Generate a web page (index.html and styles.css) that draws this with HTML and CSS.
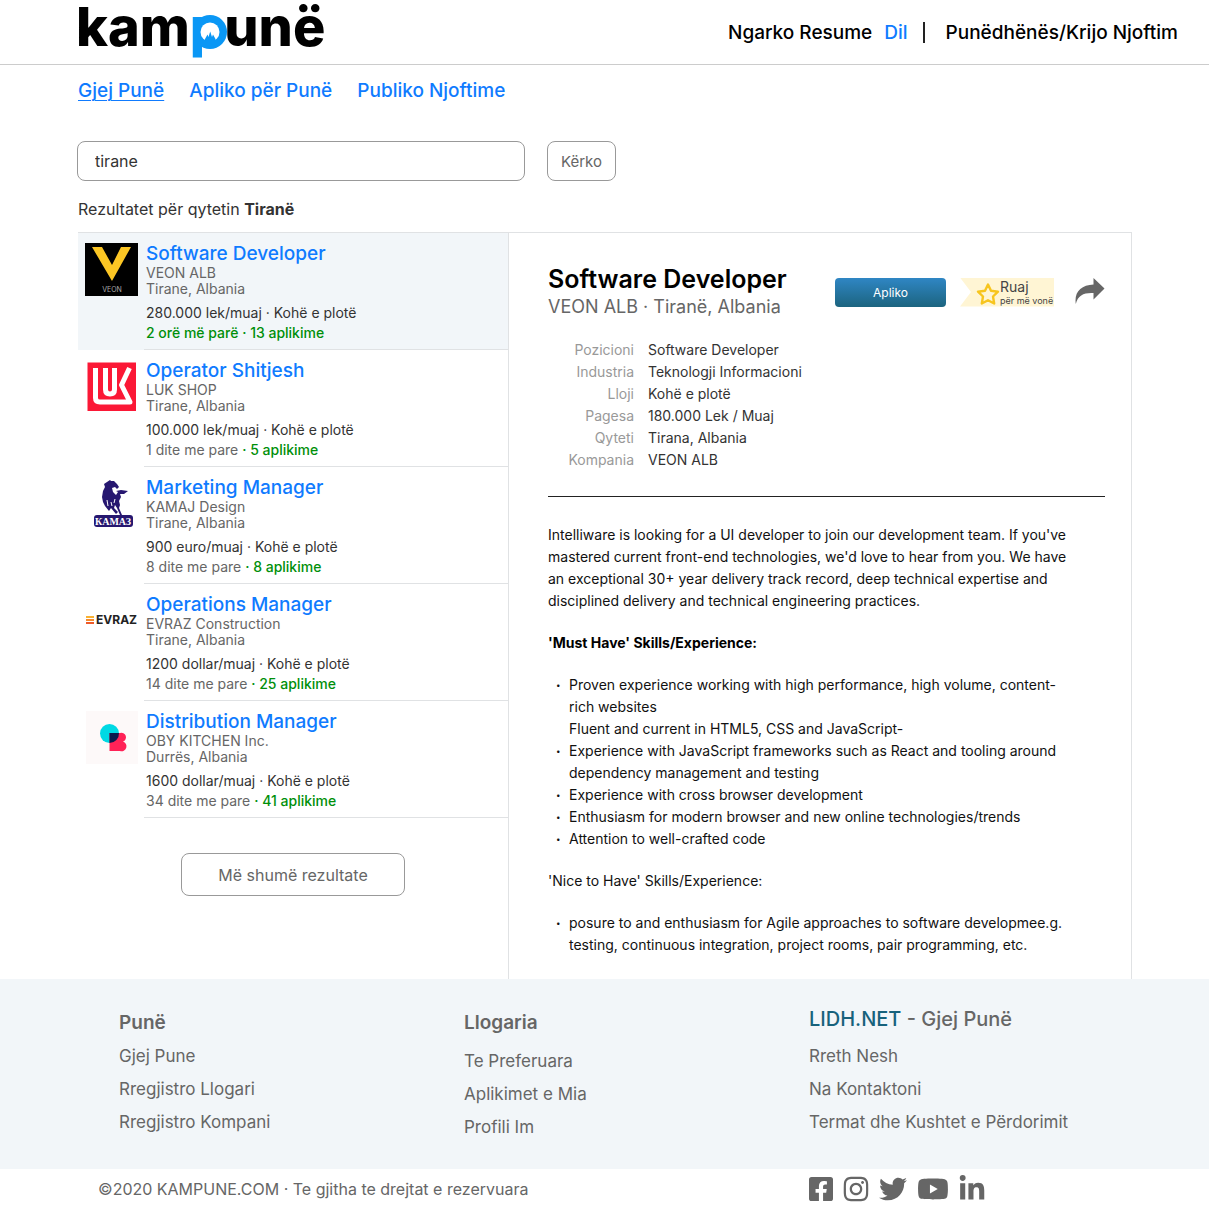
FILE: index.html
```html
<!DOCTYPE html>
<html lang="sq">
<head>
<meta charset="utf-8">
<meta name="viewport" content="width=device-width, initial-scale=1">
<title>kampunë – Gjej Punë</title>
<link rel="stylesheet" href="styles.css">
</head>
<body>
<header class="topbar">
  <a class="brand" href="#" aria-label="kampunë">kam<span class="brand-p">p<svg class="brand-bowl" viewBox="0 0 34 34" aria-hidden="true"><circle cx="17" cy="17" r="17" fill="#0a97f5"/><circle cx="17" cy="17" r="9.500" fill="#fff"/><path fill="#0a97f5" d="M12 27V24L14.500 19.500L15.500 22L17.200 16.500L19 22L20 19.500L22.500 24V27Z"/></svg></span>unë</a>
  <nav class="account">
    <a href="#">Ngarko Resume</a>
    <a class="logout" href="#">Dil</a>
    <span class="bar"></span>
    <a href="#">Punëdhënës/Krijo Njoftim</a>
  </nav>
</header>

<nav class="tabs">
  <a class="tab tab-active" href="#">Gjej Punë</a>
  <a class="tab" href="#">Apliko për Punë</a>
  <a class="tab" href="#">Publiko Njoftime</a>
</nav>

<form class="search">
  <input class="search-box" type="text" value="tirane" aria-label="Qyteti">
  <button class="search-button" type="button">Kërko</button>
</form>
<p class="summary">Rezultatet për qytetin <strong>Tiranë</strong></p>

<main class="board">
  <section class="results">
    <article class="job job-active">
      <svg class="logo" viewBox="0 0 53 53" aria-hidden="true"><path fill="#000" d="M0 0H53V53H0Z"/><path fill="#fcc624" d="M7 4H17L27 22L36 4H46L27 38Z"/><text x="27" y="49" text-anchor="middle" class="veon-name">VEON</text></svg>
      <div class="job-text">
        <h2><a href="#">Software Developer</a></h2>
        <p class="company">VEON ALB</p>
        <p class="company">Tirane, Albania</p>
        <p class="pay">280.000 lek/muaj · Kohë e plotë</p>
        <p class="age"><span class="count">2 orë më parë · 13 aplikime</span></p>
      </div>
    </article>
    <article class="job">
      <svg class="logo" viewBox="0 0 53 53" aria-hidden="true"><path fill="#fb1836" d="M2.500 2.500H51V51H2.500Z"/><g fill="none" stroke="#fff" stroke-width="5" stroke-linejoin="round"><path d="M10.500 8V38Q10.500 42 15 42H45L36.500 25L44.500 8"/><path d="M20.500 8V29.500Q20.500 34 25 34T29.500 29.500V8"/></g></svg>
      <div class="job-text">
        <h2><a href="#">Operator Shitjesh</a></h2>
        <p class="company">LUK SHOP</p>
        <p class="company">Tirane, Albania</p>
        <p class="pay">100.000 lek/muaj · Kohë e plotë</p>
        <p class="age">1 dite me pare <span class="count">· 5 aplikime</span></p>
      </div>
    </article>
    <article class="job">
      <svg class="logo" viewBox="0 0 53 53" aria-hidden="true"><path fill="#261770" d="M19 7L22 5L25 3L26 4L29 4L32 7L34 10L32 12L30 10L27 11L28 15L31 18L33 15L31 14L36 13L43 14L39 17L35 17L36 20L34 24L35 28L34 31L37 38H35L32 31L30 28L29 31L33 35L31 37L26 31L24 34L20 29L18 25L17 20L18 14L20 10Z"/><path d="M22 23L23 29M26 25L27 29M30 22L29 26" stroke="#fff" fill="none"/><rect x="9" y="38" width="39" height="12" rx="3" fill="#261770"/><text x="28" y="48" text-anchor="middle" class="kamaz-name">КАМАЗ</text></svg>
      <div class="job-text">
        <h2><a href="#">Marketing Manager</a></h2>
        <p class="company">KAMAJ Design</p>
        <p class="company">Tirane, Albania</p>
        <p class="pay">900 euro/muaj · Kohë e plotë</p>
        <p class="age">8 dite me pare <span class="count">· 8 aplikime</span></p>
      </div>
    </article>
    <article class="job">
      <svg class="logo" viewBox="0 0 53 53" aria-hidden="true"><path fill="#f9b233" d="M1 22H9V24H1Z"/><path fill="#f68b2c" d="M1 25H9V27H1Z"/><path fill="#ee5a2a" d="M1 28H9V30H1Z"/><text x="11" y="30" class="evraz-name">EVRAZ</text></svg>
      <div class="job-text">
        <h2><a href="#">Operations Manager</a></h2>
        <p class="company">EVRAZ Construction</p>
        <p class="company">Tirane, Albania</p>
        <p class="pay">1200 dollar/muaj · Kohë e plotë</p>
        <p class="age">14 dite me pare <span class="count">· 25 aplikime</span></p>
      </div>
    </article>
    <article class="job">
      <svg class="logo" viewBox="0 0 53 53" aria-hidden="true"><path fill="#fdf9f9" d="M1 0H53V53H1Z"/><circle cx="24.500" cy="22.500" r="9.500" fill="#00d9e4"/><path fill="#ff2257" d="M24.500 22H35A4.500 4.500 0 0 1 38 30.500A4.800 4.800 0 0 1 35 40H24.500Z"/><path fill="#091a4d" d="M24.500 22H34A9.500 9.500 0 0 1 24.500 32Z"/></svg>
      <div class="job-text">
        <h2><a href="#">Distribution Manager</a></h2>
        <p class="company">OBY KITCHEN Inc.</p>
        <p class="company">Durrës, Albania</p>
        <p class="pay">1600 dollar/muaj · Kohë e plotë</p>
        <p class="age">34 dite me pare <span class="count">· 41 aplikime</span></p>
      </div>
    </article>
    <button class="more" type="button">Më shumë rezultate</button>
  </section>

  <section class="detail">
    <div class="detail-head">
      <div class="detail-title">
        <h1>Software Developer</h1>
        <p>VEON ALB · Tiranë, Albania</p>
      </div>
      <div class="actions">
        <button class="apply" type="button">Apliko</button>
        <button class="save" type="button">
          <svg class="star" viewBox="0 0 24 24" aria-hidden="true"><path d="M12 2.500L15 8.800L22 9.700L17 14.500L18.200 21.500L12 18.200L5.800 21.500L7 14.500L2 9.700L9 8.800Z" fill="none" stroke="#f7c51e" stroke-width="2.400" stroke-linejoin="round"/></svg>
          <span class="save-text"><span class="save-main">Ruaj</span><span class="save-sub">për më vonë</span></span>
        </button>
        <button class="share" type="button" aria-label="Shpërndaj"><svg viewBox="0 0 30 28" aria-hidden="true"><path fill="#666" d="M18.500 0L29.500 10.500L18.500 21.500V15C9 14.500 3 17 .800 26C-1 14 6 7 18.500 6.500Z"/></svg></button>
      </div>
    </div>
    <dl class="facts">
      <dt>Pozicioni</dt><dd>Software Developer</dd>
      <dt>Industria</dt><dd>Teknologji Informacioni</dd>
      <dt>Lloji</dt><dd>Kohë e plotë</dd>
      <dt>Pagesa</dt><dd>180.000 Lek / Muaj</dd>
      <dt>Qyteti</dt><dd>Tirana, Albania</dd>
      <dt>Kompania</dt><dd>VEON ALB</dd>
    </dl>
    <div class="description">
      <p>Intelliware is looking for a UI developer to join our development team. If you've<br>mastered current front-end technologies, we'd love to hear from you. We have<br>an exceptional 30+ year delivery track record, deep technical expertise and<br>disciplined delivery and technical engineering practices.</p>
      <p class="strong">'Must Have' Skills/Experience:</p>
      <ul>
        <li>Proven experience working with high performance, high volume, content-<br>rich websites<br>Fluent and current in HTML5, CSS and JavaScript-</li>
        <li>Experience with JavaScript frameworks such as React and tooling around<br>dependency management and testing</li>
        <li>Experience with cross browser development</li>
        <li>Enthusiasm for modern browser and new online technologies/trends</li>
        <li>Attention to well-crafted code</li>
      </ul>
      <p>'Nice to Have' Skills/Experience:</p>
      <ul>
        <li>posure to and enthusiasm for Agile approaches to software developmee.g.<br>testing, continuous integration, project rooms, pair programming, etc.</li>
      </ul>
    </div>
  </section>
</main>

<footer>
  <div class="links">
    <div class="column">
      <h3>Punë</h3>
      <a href="#">Gjej Pune</a>
      <a href="#">Rregjistro Llogari</a>
      <a href="#">Rregjistro Kompani</a>
    </div>
    <div class="column column-account">
      <h3>Llogaria</h3>
      <a href="#">Te Preferuara</a>
      <a href="#">Aplikimet e Mia</a>
      <a href="#">Profili Im</a>
    </div>
    <div class="column column-site">
      <h3><span class="site">LIDH.NET</span> - Gjej Punë</h3>
      <a href="#">Rreth Nesh</a>
      <a href="#">Na Kontaktoni</a>
      <a href="#">Termat dhe Kushtet e Përdorimit</a>
    </div>
  </div>
  <div class="legal">
    <p>©2020 KAMPUNE.COM · Te gjitha te drejtat e rezervuara</p>
    <div class="social">
      <a href="#" aria-label="Facebook"><svg width="24" height="28" viewBox="0 0 448 512"><path d="M400 32H48A48 48 0 0 0 0 80v352a48 48 0 0 0 48 48h137.250V327.690h-63V256h63v-54.640c0-62.150 37-96.480 93.670-96.480 27.140 0 55.520 4.840 55.520 4.840v61h-31.270c-30.810 0-40.420 19.120-40.420 38.730V256h68.780l-11 71.690h-57.780V480H400a48 48 0 0 0 48-48V80a48 48 0 0 0-48-48z"/></svg></a>
      <a href="#" aria-label="Instagram"><svg width="26" height="28" viewBox="0 0 448 512"><path d="M224.100 141c-63.600 0-114.900 51.300-114.900 114.900s51.300 114.900 114.900 114.900S339 319.500 339 255.900 287.700 141 224.100 141zm0 189.600c-41.100 0-74.700-33.500-74.700-74.700s33.500-74.700 74.700-74.700 74.700 33.500 74.700 74.700-33.600 74.700-74.700 74.700zm146.400-194.300c0 14.900-12 26.800-26.800 26.800-14.900 0-26.800-12-26.800-26.800s12-26.800 26.800-26.800 26.800 12 26.800 26.800zm76.100 27.200c-1.700-35.900-9.900-67.700-36.200-93.900-26.200-26.200-58-34.400-93.900-36.200-37-2.100-147.900-2.100-184.900 0-35.800 1.700-67.600 9.900-93.900 36.100s-34.400 58-36.200 93.900c-2.100 37-2.100 147.900 0 184.900 1.700 35.900 9.900 67.700 36.200 93.900s58 34.400 93.900 36.200c37 2.100 147.900 2.100 184.900 0 35.900-1.700 67.700-9.900 93.900-36.200 26.200-26.200 34.400-58 36.200-93.900 2.100-37 2.100-147.800 0-184.800zM398.800 388c-7.800 19.600-22.900 34.700-42.600 42.600-29.500 11.700-99.500 9-132.100 9s-102.700 2.600-132.100-9c-19.600-7.800-34.700-22.900-42.600-42.600-11.700-29.500-9-99.500-9-132.100s-2.600-102.700 9-132.100c7.800-19.600 22.900-34.700 42.600-42.600 29.500-11.700 99.500-9 132.100-9s102.700-2.600 132.100 9c19.600 7.800 34.700 22.900 42.600 42.600 11.700 29.500 9 99.500 9 132.100s2.700 102.700-9 132.100z"/></svg></a>
      <a href="#" aria-label="Twitter"><svg width="28" height="28" viewBox="0 0 512 512"><path d="M459.370 151.716c.325 4.548.325 9.097.325 13.645 0 138.720-105.583 298.558-298.558 298.558-59.452 0-114.680-17.219-161.137-47.106 8.447.974 16.568 1.299 25.340 1.299 49.055 0 94.213-16.568 130.274-44.832-46.132-.975-84.792-31.188-98.112-72.772 6.498.974 12.995 1.624 19.818 1.624 9.421 0 18.843-1.300 27.614-3.573-48.081-9.747-84.143-51.980-84.143-102.985v-1.299c13.969 7.797 30.214 12.670 47.431 13.319-28.264-18.843-46.781-51.005-46.781-87.391 0-19.492 5.197-37.360 14.294-52.954 51.655 63.675 129.300 105.258 216.365 109.807-1.624-7.797-2.599-15.918-2.599-24.040 0-57.828 46.782-104.934 104.934-104.934 30.213 0 57.502 12.670 76.670 33.137 23.715-4.548 46.456-13.320 66.599-25.340-7.798 24.366-24.366 44.833-46.132 57.827 21.117-2.273 41.584-8.122 60.426-16.243-14.292 20.791-32.161 39.308-52.628 54.253z"/></svg></a>
      <a href="#" aria-label="YouTube"><svg width="32" height="28" viewBox="0 0 576 512"><path d="M549.655 124.083c-6.281-23.650-24.787-42.276-48.284-48.597C458.781 64 288 64 288 64S117.220 64 74.629 75.486c-23.497 6.322-42.003 24.947-48.284 48.597-11.412 42.867-11.412 132.305-11.412 132.305s0 89.438 11.412 132.305c6.281 23.650 24.787 41.500 48.284 47.821C117.220 448 288 448 288 448s170.780 0 213.371-11.486c23.497-6.321 42.003-24.171 48.284-47.821 11.412-42.867 11.412-132.305 11.412-132.305s0-89.438-11.412-132.305zm-317.510 213.508V175.185l142.739 81.205-142.739 81.201z"/></svg></a>
      <a href="#" aria-label="LinkedIn"><svg width="26" height="28" viewBox="0 0 448 512"><path d="M100.280 448H7.400V148.900h92.880zM53.790 108.100C24.090 108.100 0 83.500 0 53.800a53.790 53.790 0 0 1 107.580 0c0 29.700-24.100 54.300-53.790 54.300zM447.900 448h-92.680V302.400c0-34.700-.7-79.200-48.290-79.200-48.290 0-55.690 37.700-55.690 76.700V448h-92.780V148.900h89.080v40.800h1.300c12.400-23.500 42.690-48.300 87.880-48.300 94 0 111.280 61.900 111.280 142.300V448z"/></svg></a>
    </div>
  </div>
</footer>
</body>
</html>
```
FILE: styles.css
```css
* { box-sizing: border-box; }

body {
  margin: 0;
  background: #fff;
  color: #333;
  font-family: Inter, "Open Sans", sans-serif;
  font-size: 14px;
}

h1, h2, h3, p, ul, dl, dd { margin: 0; padding: 0; }
a { color: inherit; text-decoration: none; }
button { font: inherit; cursor: pointer; }

/* header */
.topbar {
  display: flex;
  justify-content: space-between;
  align-items: center;
  height: 65px;
  padding: 0 31px 0 76px;
  border-bottom: 1px solid #ccc;
}
.brand {
  padding-bottom: 11px;
  color: #000;
  font-size: 54px;
  font-weight: 800;
  line-height: 52px;
}
.brand-p { position: relative; color: #0a97f5; }
.brand-bowl { position: absolute; left: 3px; top: 21px; width: 34px; height: 34px; }
.account {
  display: flex;
  align-items: center;
  color: #000;
  font-size: 19px;
  font-weight: 500;
}
.logout { margin-left: 12px; color: #0f7bff; }
.bar { width: 2px; height: 21px; margin: 0 21px 0 15px; background: #222; }

/* section tabs */
.tabs {
  display: flex;
  gap: 25px;
  padding: 15px 78px 0;
  color: #0f7bff;
  font-size: 19px;
  font-weight: 500;
  line-height: 22px;
}
.tab-active { text-decoration: underline; text-decoration-thickness: 1px; text-underline-offset: 3px; }

/* search */
.search { display: flex; gap: 22px; padding: 39px 77px 0; }
.search-box {
  flex: 0 1 448px;
  min-width: 0;
  height: 40px;
  padding: 0 17px;
  border: 1px solid #999;
  border-radius: 8px;
  color: #333;
  font: inherit;
  font-size: 16px;
}
.search-button {
  height: 40px;
  padding: 0 13px;
  border: 1px solid #999;
  border-radius: 8px;
  background: #fff;
  color: #666;
  font-size: 15px;
}
.summary { padding: 18px 78px 13px; font-size: 16px; line-height: 20px; }

/* two-pane board */
.board {
  display: grid;
  grid-template-columns: 430fr 624fr;
  padding: 0 77px 0 78px;
}
.results { border-top: 1px solid #e0e2e4; }
.job { display: flex; gap: 6px; padding-left: 7px; }
.job-active { background: #f2f6f9; }
.logo { flex: none; width: 53px; height: 53px; margin-top: 10px; }
.job-text { flex: 1; padding: 10px 0 6px 2px; border-bottom: 1px solid #e0e2e4; }
.job h2 { color: #0f7bff; font-size: 19px; font-weight: 500; line-height: 22px; }
.company { color: #666; line-height: 16px; }
.pay { margin-top: 6px; line-height: 20px; }
.age { color: #666; line-height: 20px; }
.count { color: #008f0a; font-weight: 500; }
.veon-name { fill: #aaa; font-size: 7px; }
.kamaz-name { fill: #fff; font: bold 10px "Liberation Serif", serif; }
.evraz-name { fill: #222; font-size: 12px; font-weight: 700; }
.more {
  display: block;
  width: 224px;
  height: 43px;
  margin: 35px auto 0 103px;
  border: 1px solid #999;
  border-radius: 8px;
  background: #fff;
  color: #666;
  font-size: 16px;
}

/* job detail */
.detail {
  padding: 31px 26px 23px 39px;
  border: 1px solid #e0e2e4;
  border-bottom: 0;
}
.detail-head { display: flex; justify-content: space-between; }
.detail h1 { color: #000; font-size: 25px; font-weight: 600; line-height: 30px; }
.detail-title p { color: #666; font-size: 18px; line-height: 26px; }
.actions { display: flex; align-items: center; height: 30px; margin-top: 13px; }
.apply {
  width: 111px;
  height: 29px;
  border: 0;
  border-radius: 4px;
  background: linear-gradient(#2f86c4, #1c647f);
  color: #fff;
  font-size: 12px;
}
.save {
  display: flex;
  align-items: center;
  width: 94px;
  height: 29px;
  margin-left: 14px;
  padding: 0 0 0 16px;
  border: 0;
  background: #fff5d4;
  clip-path: polygon(0 0, 100% 0, 100% 100%, 0 100%, 11px 50%);
  color: #444;
}
.star { flex: none; width: 24px; height: 24px; margin-top: 4px; }
.save-text { display: grid; text-align: left; white-space: nowrap; }
.save-main { font-size: 14px; line-height: 17px; }
.save-sub { font-size: 9px; line-height: 11px; }
.share { width: 30px; height: 28px; margin-left: 21px; padding: 0; border: 0; background: none; }
.share svg { display: block; width: 30px; height: 28px; }
.facts {
  display: grid;
  grid-template-columns: 86px 1fr;
  column-gap: 14px;
  padding: 19px 0 25px;
  border-bottom: 1px solid #222;
  line-height: 22px;
}
.facts dt { color: #999; text-align: right; }
.description {
  display: grid;
  gap: 20px;
  padding-top: 27px;
  color: #111;
  line-height: 22px;
}
.strong { color: #000; font-weight: 700; }
.description ul { padding-left: 21px; list-style: none; }
.description li::before { content: "•"; float: left; margin-left: -13px; font-size: 8px; }

/* footer */
.links {
  display: grid;
  grid-template-columns: repeat(3, 1fr);
  padding: 31px 55px 25px 119px;
  background: #f2f6f9;
  color: #666;
}
.column { display: grid; align-content: start; font-size: 17px; font-weight: 400; line-height: 33px; }
.column h3 { margin-bottom: 4px; font-size: 19px; font-weight: 600; line-height: 26px; }
.column-account h3 { margin-bottom: 9px; }
.column-site h3 { margin: -4px 0 8px; font-size: 20px; font-weight: 500; }
.site { color: #17627c; }
.legal {
  display: grid;
  grid-template-columns: 711fr 400fr;
  align-items: center;
  height: 39px;
  padding-left: 98px;
  color: #666;
  font-size: 16px;
}
.social { display: flex; gap: 10px; }
.social svg { display: block; fill: #666; }
```
